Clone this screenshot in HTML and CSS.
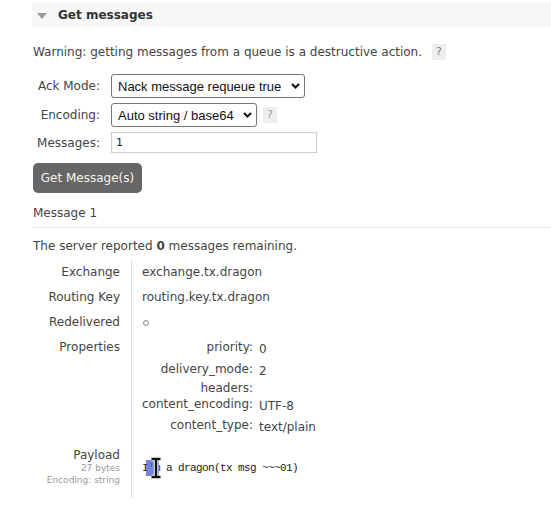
FILE: index.html
```html
<!DOCTYPE html>
<html>
<head>
<meta charset="utf-8">
<link rel="stylesheet" href="styles.css">
</head>
<body>
<div class="section">
  <div class="section-header">
    <svg class="tri" width="10" height="6" viewBox="0 0 10 6"><path d="M0 0 L10 0 L5 6 Z" fill="#9a9a9a"/></svg>
    <h2>Get messages</h2>
  </div>
  <p class="warning">Warning: getting messages from a queue is a destructive action. <span class="help">?</span></p>
  <div class="form">
    <label class="flabel">Ack Mode:</label>
    <div class="fctl">
      <div class="selwrap w1">
        <select class="sel"><option>Nack message requeue true</option></select>
        <svg class="chev" width="9" height="6" viewBox="0 0 9 6"><path d="M1 1 L4.5 4.5 L8 1" fill="none" stroke="#111" stroke-width="2"/></svg>
      </div>
    </div>
    <label class="flabel">Encoding:</label>
    <div class="fctl">
      <div class="selwrap w2">
        <select class="sel"><option>Auto string / base64</option></select>
        <svg class="chev" width="9" height="6" viewBox="0 0 9 6"><path d="M1 1 L4.5 4.5 L8 1" fill="none" stroke="#111" stroke-width="2"/></svg>
      </div>
      <span class="help small">?</span>
    </div>
    <label class="flabel">Messages:</label>
    <div class="fctl"><input class="txt" type="text" value="1"></div>
  </div>
  <button class="btn">Get Message(s)</button>
  <div class="msg-title">Message 1</div>
  <p class="remaining">The server reported <b>0</b> messages remaining.</p>
  <div class="details">
    <div class="dk r1">Exchange</div><div class="dv r1">exchange.tx.dragon</div>
    <div class="dk r2">Routing Key</div><div class="dv r2">routing.key.tx.dragon</div>
    <div class="dk r3">Redelivered</div><div class="dv r3"><span class="circle"></span></div>
    <div class="dk r4">Properties</div>
    <div class="dv r4">
      <div class="props">
        <div class="pk h22">priority:</div><div class="pv h22">0</div>
        <div class="pk h22">delivery_mode:</div><div class="pv h22">2</div>
        <div class="pk h16">headers:</div><div class="pv h16"></div>
        <div class="pk h16">content_encoding:</div><div class="pv h16">UTF-8</div>
        <div class="pk h26">content_type:</div><div class="pv h26">text/plain</div>
      </div>
    </div>
    <div class="dk r5">
      <div class="pl">Payload</div>
      <div class="sub">27 bytes</div>
      <div class="sub">Encoding: string</div>
    </div>
    <div class="dv r5"><pre class="payload">I'm a dragon(tx msg ~~~01)<span class="selbox"></span><svg class="ibeam" width="12" height="22" viewBox="0 0 12 22"><path d="M1.5 2 H10.5 M6 2 V20 M1.5 20 H10.5" fill="none" stroke="#fff" stroke-width="4.5"/><path d="M1.5 2 H10.5 M6 2 V20 M1.5 20 H10.5" fill="none" stroke="#111" stroke-width="2.5"/></svg></pre></div>
  </div>
</div>
</body>
</html>
```

FILE: styles.css
```css
html, body { margin: 0; padding: 0; background: #fff; }
body {
  font-family: "DejaVu Sans", Verdana, sans-serif;
  font-size: 12px;
  color: #444;
}
.section { padding-left: 32px; }
.section-header {
  margin-top: 3px;
  height: 24px;
  background: #f7f7f7;
  display: flex;
  align-items: center;
  padding-left: 5px;
}
.tri { margin-right: 11px; margin-top: 1px; }
.section-header h2 {
  margin: 0;
  font-size: 12px;
  font-weight: bold;
  color: #333;
}
.warning {
  margin: 17px 0 0 1px;
  line-height: 16px;
  display: flex;
  align-items: center;
  white-space: pre;
}
.help {
  display: inline-block;
  background: #eee;
  color: #777;
  font-size: 11px;
  width: 14px;
  height: 16px;
  line-height: 16px;
  text-align: center;
  margin-left: 6px;
}
.help.small { margin-left: 6px; color: #999; }
.form {
  margin-top: 14px;
  display: grid;
  grid-template-columns: 68px auto;
  column-gap: 11px;
  row-gap: 5px;
  align-items: center;
}
.flabel { text-align: right; }
.fctl { display: flex; align-items: center; }
.selwrap { position: relative; height: 24px; }
.w1 { width: 194px; }
.w2 { width: 146px; }
.sel {
  appearance: none;
  -webkit-appearance: none;
  width: 100%;
  height: 100%;
  margin: 0;
  border: 1px solid #767676;
  border-radius: 3px;
  background: #fff;
  font-family: "Liberation Sans", Arial, sans-serif;
  font-size: 13px;
  color: #111;
  padding: 0 0 0 6px;
}
.chev { position: absolute; right: 5px; top: 9px; pointer-events: none; }
.txt {
  width: 206px;
  height: 21px;
  box-sizing: border-box;
  border: 1px solid #ccc;
  margin: 0;
  padding: 0 4px;
  font-family: "DejaVu Sans", Verdana, sans-serif;
  font-size: 11px;
  color: #222;
}
.btn {
  margin: 10px 0 0 1px;
  width: 109px;
  height: 30px;
  border: none;
  border-radius: 5px;
  background: #666;
  color: #f2f2f2;
  font-family: "DejaVu Sans", Verdana, sans-serif;
  font-size: 12px;
  padding: 0;
}
.msg-title {
  margin: 12px 0 0 1px;
  line-height: 16px;
  padding-bottom: 6px;
  border-bottom: 1px solid #e3e3e3;
}
.remaining { margin: 10px 0 0 1px; line-height: 16px; }
.details {
  margin-top: 6px;
  display: grid;
  grid-template-columns: 99px auto;
}
.dk { text-align: right; padding-right: 11px; }
.dv { border-left: 1px solid #ddd; padding-left: 10px; }
.r1, .r2 { height: 25px; line-height: 25px; }
.r3 { height: 24px; line-height: 24px; }
.r3.dv { display: flex; align-items: center; padding-top: 2px; box-sizing: border-box; }
.circle {
  display: inline-block;
  width: 4px; height: 4px;
  border: 1px solid #888;
  border-radius: 50%;
  margin-left: 1px;
}
.r4.dk { padding-top: 2px; line-height: 22px; }
.r4.dv { padding-top: 2px; padding-bottom: 6px; }
.props { display: grid; grid-template-columns: 111px auto; column-gap: 6px; }
.pk { text-align: right; }
.pv { padding-top: 2px; box-sizing: border-box; }
.h22 { height: 22px; line-height: 22px; }
.h16 { height: 16px; line-height: 16px; }
.h26 { height: 26px; line-height: 26px; }
.r5 { padding-top: 4px; padding-bottom: 12px; }
.pl { line-height: 14px; }
.sub { font-size: 9px; line-height: 12px; color: #999; }
.payload {
  position: relative;
  margin: 13px 0 0 0;
  font-family: "Liberation Mono", "DejaVu Sans Mono", monospace;
  font-size: 11px;
  letter-spacing: -0.6px;
  line-height: 14px;
  color: #222;
}
.selbox {
  position: absolute;
  left: 4px;
  top: -1px;
  width: 13px;
  height: 16px;
  background: rgba(70, 90, 210, 0.75);
}
.ibeam { position: absolute; left: 8px; top: -4px; }
```
